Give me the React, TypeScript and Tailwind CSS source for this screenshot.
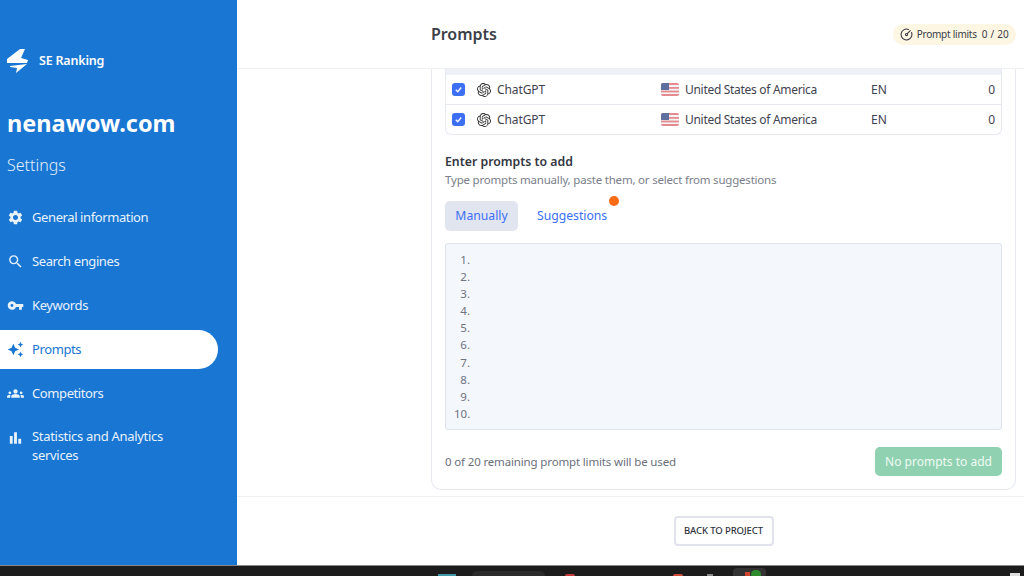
import { CircleGauge } from "lucide-react";
import { MdAutoAwesome, MdBarChart, MdGroups, MdSearch, MdSettings, MdVpnKey } from "react-icons/md";
import { SiOpenai } from "react-icons/si";

const font = { fontFamily: '"Noto Sans", sans-serif' };

const navItems = [
  { label: "General information", icon: MdSettings },
  { label: "Search engines", icon: MdSearch },
  { label: "Keywords", icon: MdVpnKey },
  { label: "Prompts", icon: MdAutoAwesome, active: true },
  { label: "Competitors", icon: MdGroups },
];

function Flag() {
  return (
    <svg width="18" height="13" viewBox="0 0 18 13" className="shrink-0 rounded-[2px]">
      <rect width="18" height="13" fill="#f4f4f6" />
      <rect y="0" width="18" height="2" fill="#e58b8f" />
      <rect y="4" width="18" height="1.8" fill="#e58b8f" />
      <rect y="7.6" width="18" height="1.8" fill="#e58b8f" />
      <rect y="11" width="18" height="2" fill="#e58b8f" />
      <rect width="8" height="7" fill="#5f6f9f" />
    </svg>
  );
}

function Row({ last }: { last?: boolean }) {
  return (
    <div className={`flex items-center text-[12px] text-[#3f4350] ${last ? "h-[29px]" : "h-[30px] border-b border-[#e6e8f2]"}`}>
      <span className="ml-[6px] flex h-[13px] w-[13px] items-center justify-center rounded-[3px] bg-[#3d6ff5]">
        <svg width="9" height="9" viewBox="0 0 10 10" fill="none" stroke="white" strokeWidth="1.5">
          <path d="M2 5.2 4.2 7.4 8 2.8" />
        </svg>
      </span>
      <SiOpenai className="ml-[12px] text-[14px] text-[#333]" />
      <span className="ml-[6px] w-[164px] tracking-[-0.1px]">ChatGPT</span>
      <Flag />
      <span className="ml-[6px] w-[186px] tracking-[-0.3px]">United States of America</span>
      <span className="w-[30px]">EN</span>
      <span className="flex-1 pr-[6px] text-right">0</span>
    </div>
  );
}

export default function App() {
  return (
    <div className="flex h-[576px] w-[1024px] flex-col overflow-hidden bg-white" style={font}>
      <div className="flex min-h-0 flex-1">
        <aside className="w-[237px] shrink-0 bg-[#1976d2] text-white">
          <div className="flex items-center pl-[7px] pt-[49px]">
            <svg width="22" height="24" viewBox="0 0 22 24" fill="white">
              <path d="M0 10 13 0 18 0 14 9 21 11 20 14 0 14Z" />
              <path d="M3 17 20 15 9 24 10 19 3 18Z" />
            </svg>
            <span className="ml-[10px] mt-[1px] text-[12.5px] font-semibold tracking-[-0.2px]">SE Ranking</span>
          </div>
          <div className="mt-[33px] pl-[7px] pt-[1px] text-[23.5px] leading-[32px] font-bold">nenawow.com</div>
          <div className="mt-[14px] pl-[7px] text-[16px] leading-[24px] font-light text-[#e3effa]">Settings</div>
          <nav className="mt-[21px] flex flex-col gap-[5px]">
            {navItems.map((item) => (
              <div
                key={item.label}
                className={`flex h-[39px] w-[218px] items-center rounded-r-[20px] pl-[7px] text-[13px] tracking-[-0.4px] ${
                  item.active ? "bg-white text-[#1976d2]" : "text-[#e8f2fb]"
                }`}
              >
                <item.icon className="w-[17px] text-[17px]" />
                <span className="ml-[8px]">{item.label}</span>
              </div>
            ))}
            <div className="flex w-[218px] items-start pl-[7px] pt-[9px] text-[13px] leading-[19px] tracking-[-0.3px] text-[#e8f2fb]">
              <MdBarChart className="mt-[1px] w-[17px] text-[20px]" />
              <span className="ml-[8px]">
                Statistics and Analytics
                <br />
                services
              </span>
            </div>
          </nav>
        </aside>

        <main className="flex min-w-0 flex-1 flex-col">
          <header className="flex h-[69px] shrink-0 items-center justify-between border-b border-[#eef0f5] pl-[194px] pr-[8px]">
            <h1 className="text-[16px] font-semibold tracking-[-0.05px] text-[#3c3f48]">Prompts</h1>
            <div className="flex h-[21px] items-center rounded-full bg-[#fdf6e3] px-[7px] text-[10px] text-[#3a3d47]">
              <CircleGauge size={13} />
              <span className="ml-[4px] tracking-[-0.25px]">Prompt limits</span>
              <span className="ml-[5px] tracking-[0.2px]">0 / 20</span>
            </div>
          </header>

          <div className="min-h-0 flex-1 pl-[194px] pr-[8px]">
            <section className="h-[421px] rounded-b-[10px] border border-t-0 border-[#e6e8f2] px-[13px]">
              <div className="overflow-hidden rounded-b-[6px] border border-t-0 border-[#e6e8f2]">
                <div className="h-[6px] bg-[#eef2f8]" />
                <Row />
                <Row last />
              </div>

              <h2 className="mt-[18px] text-[12.3px] leading-[18px] font-semibold text-[#33363f]">Enter prompts to add</h2>
              <p className="mt-[1px] text-[11.5px] leading-[16px] tracking-[-0.2px] text-[#7a7e8a]">
                Type prompts manually, paste them, or select from suggestions
              </p>

              <div className="relative mt-[13px] flex h-[30px] items-center pt-[1px] text-[12.2px] text-[#3d6ff5]">
                <span className="-mt-[1px] flex h-[30px] w-[73px] items-center justify-center rounded-[5px] bg-[#e1e5f0] pt-[1px]">Manually</span>
                <span className="ml-[19px]">Suggestions</span>
                <span className="absolute left-[164px] top-[-5px] h-[10px] w-[10px] rounded-full bg-[#fb6a14]" />
              </div>

              <div className="mt-[12px] h-[187px] rounded-[3px] border border-[#dfe3ee] bg-[#f4f7fb] pl-[8px] pt-[7px]">
                <ol className="text-[11.5px] leading-[17.1px] text-[#6f7380]">
                  {["1.", "2.", "3.", "4.", "5.", "6.", "7.", "8.", "9.", "10."].map((n) => (
                    <li key={n} className="w-[16px] text-right">{n}</li>
                  ))}
                </ol>
              </div>

              <div className="mt-[17px] flex items-center justify-between">
                <span className="text-[11.5px] tracking-[-0.15px] text-[#6b6f7b]">0 of 20 remaining prompt limits will be used</span>
                <span className="flex h-[29px] w-[127px] items-center justify-center rounded-[5px] bg-[#8fd1b0] text-[12px] text-[#f0faf5]">
                  No prompts to add
                </span>
              </div>
            </section>
          </div>

          <footer className="flex h-[69px] shrink-0 justify-center border-t border-[#eef0f5] pl-[194px] pr-[8px] pt-[19px]">
            <button className="h-[30px] w-[100px] rounded-[4px] border-2 border-[#e0e2ee] text-[9.5px] font-medium tracking-[-0.1px] text-[#2f323b]">
              BACK TO PROJECT
            </button>
          </footer>
        </main>
      </div>

      <div className="flex h-[11px] shrink-0 items-end overflow-hidden border-t border-[#888] bg-[#1c1c1c]">
        <span className="ml-[438px] h-[2px] w-[18px] bg-[#3f97a8]" />
        <span className="ml-[16px] h-[5px] w-[73px] rounded-t-[6px] bg-[#2b2b2b]" />
        <span className="ml-[20px] h-[2px] w-[10px] rounded-t-full bg-[#c73a3a]" />
        <span className="ml-[98px] h-[2px] w-[10px] rounded-t-full bg-[#d04a3a]" />
        <span className="ml-[24px] h-[2px] w-[6px] bg-[#888]" />
        <span className="relative ml-[20px] h-[8px] w-[33px] rounded-t-[4px] bg-[#333]">
          <span className="absolute bottom-0 left-[12px] h-[4px] w-[5px] bg-[#d0452f]" />
          <span className="absolute bottom-[-3px] left-[18px] h-[9px] w-[10px] rounded-full bg-[#2e8b2e]" />
        </span>
        <span className="ml-[244px] h-[3px] w-[10px] bg-[#ddd]" />
      </div>
    </div>
  );
}
